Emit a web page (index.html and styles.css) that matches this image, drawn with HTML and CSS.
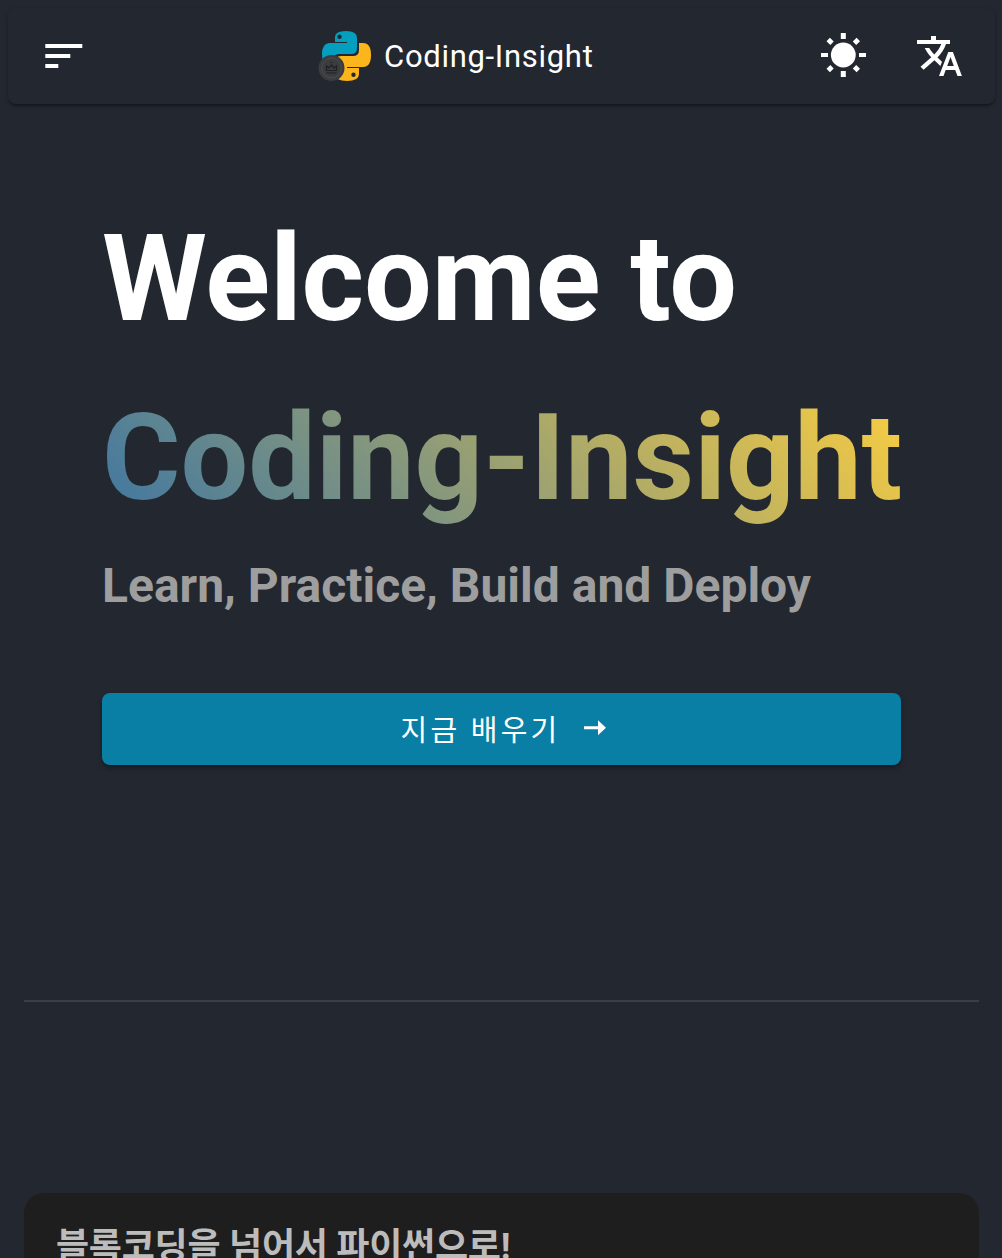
FILE: index.html
```html
<!DOCTYPE html>
<html lang="ko">
<head>
<meta charset="utf-8">
<title>Coding-Insight</title>
<link rel="stylesheet" href="styles.css">
</head>
<body>
<header class="app-bar">
  <button class="icon-button menu" aria-label="Menu">
    <svg width="40" height="26" viewBox="0 0 40 26"><path d="M1.3 1h37v4h-37zM1.3 11h25v4h-25zM1.3 21h13v4h-13z"/></svg>
  </button>
  <a class="brand" href="#">
    <svg class="logo" width="54" height="52" viewBox="0 0 54 52">
      <path fill="#049fbf" d="M17 7Q17 1 28 1q11 0 11 7v10q0 6-6 6H21q-6 0-6 6v4H9q-5 0-5-10T11 13h18v-1H17z"/>
      <path fill="#fcb51b" d="M41 13h4q8 0 8 12t-8 12H29v1h12v6q0 7-12 7t-12-7V32q0-6 6-6h12q6 0 6-6z"/>
      <circle cx="21.5" cy="6.7" r="2.2" fill="#232830"/>
      <circle cx="35.5" cy="44.7" r="2.2" fill="#232830"/>
      <circle cx="13.5" cy="38" r="13" fill="#3b3c3d"/>
      <circle cx="13.5" cy="38" r="9.8" fill="none" stroke="#4b4c4d"/>
      <path d="M8.5 36v4.5h10V36l-2.5 2-2.5-3-2.5 3zM8.5 43h10M12.5 32.5h2" fill="none" stroke="#202124" stroke-width="1.2"/>
    </svg>
    <span class="brand-name">Coding-Insight</span>
  </a>
  <div class="actions">
    <button class="icon-button" aria-label="Theme">
      <svg width="48" height="48" viewBox="0 0 48 48"><circle cx="24.3" cy="24" r="12.4"/><path d="M21.8 2h5v6h-5zM21.8 40h5v6h-5zM2 22h7v4H2zM40 22h7v4h-7z"/><path d="M7.5 10.2l3.4-3.4 3.8 3.8-3.4 3.4zM37.6 6.8l3.4 3.4-3.8 3.8-3.4-3.4zM7.5 37.8l3.4 3.4 3.8-3.8-3.4-3.4zM37.6 41.2l3.4-3.4-3.8-3.8-3.4 3.4z"/></svg>
    </button>
    <button class="icon-button" aria-label="Language">
      <svg width="48" height="48" viewBox="0 0 48 48"><path d="M16 5h5v4h14v4h-4C29.5 17.500 26.500 22.500 22.500 26.500L27 30.800 25.400 35 19.400 29.300 8.600 38.800 5.500 35.800 16.300 26.300C13.700 23.600 11.500 20.500 9.700 17h4.600c1.200 2.300 3 4.500 5 6.400 3.500-3.600 5.700-6.900 7-10.400H2V9h14zM33.300 21h4.600l9 24h-4.400l-2.300-6h-9.500l-2.200 6H24zM32.200 35h6.600l-3.300-9z"/></svg>
    </button>
  </div>
</header>
<main>
  <section class="hero">
    <h1 class="welcome">Welcome to</h1>
    <h1 class="product">Coding-Insight</h1>
    <h2 class="tagline">Learn, Practice, Build and Deploy</h2>
    <button class="start"><span>지금 배우기</span>
      <svg width="24" height="16" viewBox="0 0 24 16"><path d="M1 6.200h14V.200l8 7.500-8 7.500v-6H1z"/></svg>
    </button>
  </section>
  <hr class="divider">
  <section class="course"><h2 class="course-title">블록코딩을 넘어서 파이썬으로!</h2></section>
</main>
</body>
</html>
```
FILE: styles.css
```css
* { box-sizing: border-box; }
html { overflow: hidden; }
body {
  height: 1258px;
  margin: 0;
  padding: 8px 8px 0;
  overflow: hidden;
  background: #232830;
  color: #fff;
  font-family: Roboto, "Noto Sans CJK KR", sans-serif;
}
h1, h2 { margin: 0; font-weight: 700; white-space: nowrap; }
button { border: 0; padding: 0; color: inherit; font: inherit; }
svg { display: block; fill: #fff; flex: none; }
.app-bar {
  display: flex;
  align-items: center;
  width: 987px;
  height: 96px;
  padding: 0 32px 0 36px;
  border-radius: 8px;
  background: #232830;
  box-shadow: 0 3px 3px -1px rgba(0, 0, 0, .35), 0 1px 4px rgba(0, 0, 0, .15);
}
.icon-button { background: none; }
.brand { display: flex; align-items: center; gap: 12px; margin-left: 234px; color: #fff; text-decoration: none; }
.brand-name { padding-top: 1px; font-size: 31px; line-height: 36px; letter-spacing: .7px; }
.actions { display: flex; gap: 48px; margin-left: auto; padding-bottom: 2px; }
.hero { width: 799px; margin: 85px 0 0 94px; }
.welcome, .product { font-size: 120px; line-height: 180px; letter-spacing: -.05px; }
.welcome { height: 179px; }
.product {
  background: linear-gradient(45deg, #3873a5, #ffd03e);
  background-clip: text;
  -webkit-background-clip: text;
  color: transparent;
}
.tagline { padding-top: 2px; font-size: 48px; line-height: 72px; color: #9e9e9e; }
.start {
  display: flex;
  align-items: center;
  justify-content: center;
  gap: 23px;
  width: 100%;
  height: 72px;
  margin-top: 71px;
  padding-left: 5px;
  border-radius: 8px;
  background: #0a7fa5;
  box-shadow: 0 3px 5px rgba(0, 0, 0, .35);
  font-size: 29px;
  letter-spacing: 3.2px;
}
.start span { padding-bottom: 2px; }
.start svg { margin-bottom: 2px; }
.divider { height: 2px; margin: 235px 15px 0 16px; border: 0; background: #3a3e46; }
.course {
  height: 65px;
  margin: 191px 15px 0 16px;
  padding: 27px 32px 0;
  border-radius: 20px 20px 0 0;
  background: #1e1e1e;
}
.course-title { font-size: 36px; line-height: 54px; letter-spacing: -.25px; color: #bcbcbc; }
```
